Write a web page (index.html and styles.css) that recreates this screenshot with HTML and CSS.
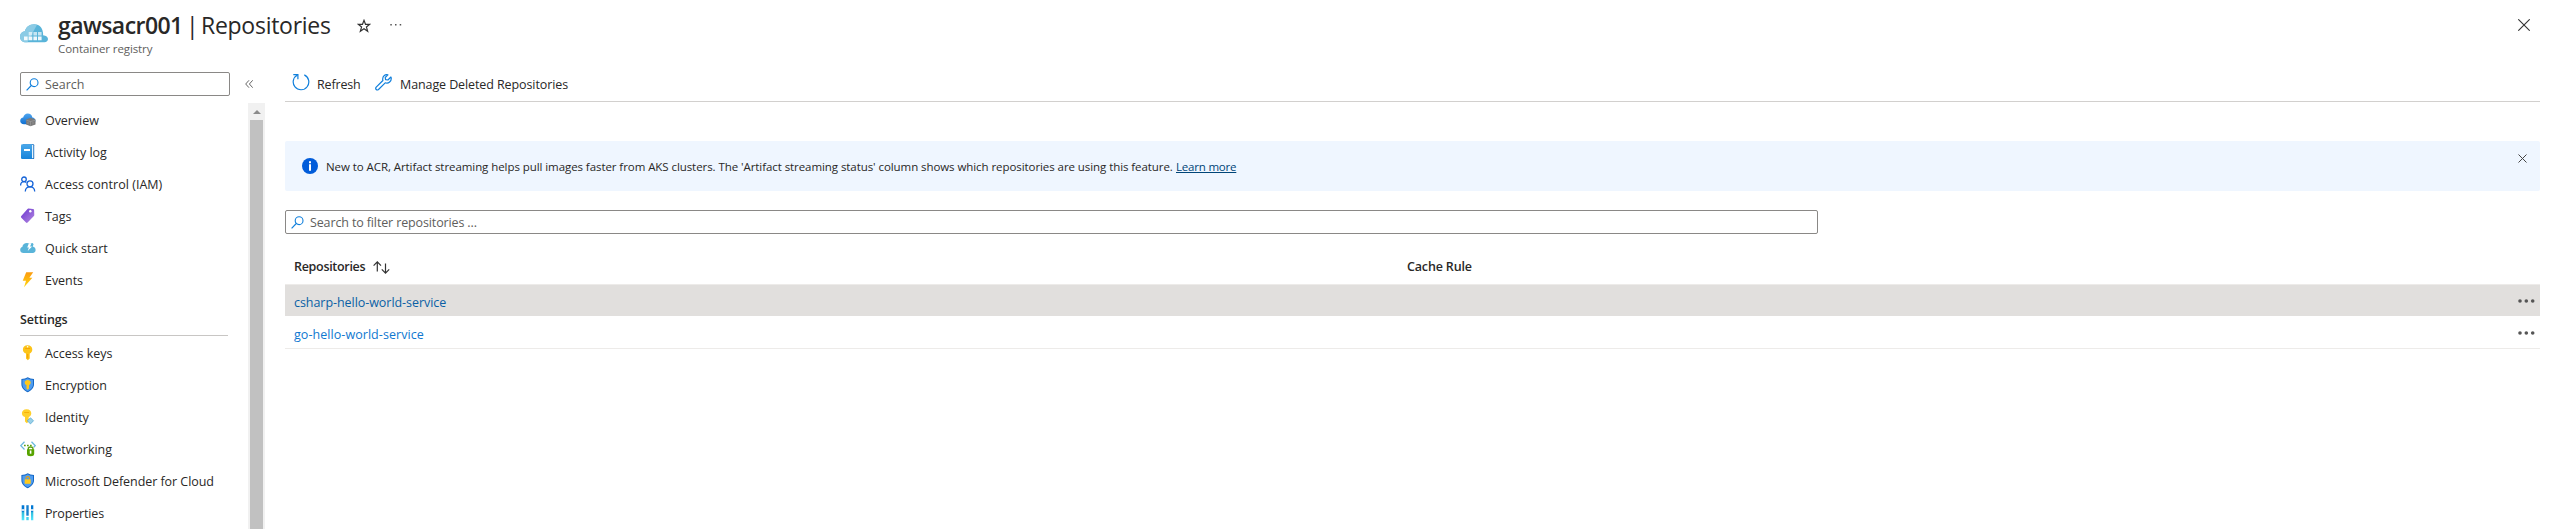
FILE: index.html
```html
<!DOCTYPE html>
<html lang="en">
<head>
<meta charset="utf-8">
<title>gawsacr001 | Repositories</title>
<link rel="stylesheet" href="styles.css">
</head>
<body>
<svg width="0" height="0" class="defs">
  <defs>
    <linearGradient id="blue" x1="0" y1="0" x2="0" y2="1"><stop offset="0" stop-color="#4fa5ef"/><stop offset="1" stop-color="#0f6fd0"/></linearGradient>
    <linearGradient id="book" x1="0" y1="0" x2="0" y2="1"><stop offset="0" stop-color="#4aa8ea"/><stop offset="1" stop-color="#1583da"/></linearGradient>
    <linearGradient id="cyan" x1="0" y1="0" x2="0" y2="1"><stop offset="0" stop-color="#0078d4"/><stop offset=".4" stop-color="#0078d4"/><stop offset=".5" stop-color="#32bedd"/><stop offset="1" stop-color="#50e6ff"/></linearGradient>
    <linearGradient id="purple" x1="0" y1="0" x2="1" y2="1"><stop offset="0" stop-color="#6a35d0"/><stop offset="1" stop-color="#b58ae0"/></linearGradient>
    <linearGradient id="gold" x1="0" y1="0" x2="0" y2="1"><stop offset="0" stop-color="#fb9a10"/><stop offset="1" stop-color="#ffd70f"/></linearGradient>
    <symbol id="lens" viewBox="0 0 13 13"><g fill="none" stroke="#0f7fdc" stroke-width="1.1"><circle cx="8.1" cy="4.7" r="3.9"/><path d="M5.3 7.5.6 12.3"/></g></symbol>
    <symbol id="more" viewBox="0 0 17 4"><g fill="#555"><circle cx="2" cy="2" r="1.8"/><circle cx="8.3" cy="2" r="1.8"/><circle cx="14.7" cy="2" r="1.8"/></g></symbol>
  </defs>
</svg>
<div class="blade">
  <header class="header">
    <svg class="logo" viewBox="0 0 28 19">
      <path fill="#59b4d9" d="M6 18.300C2.600 18.300 0 15.800 0 12.700 0 9.800 2.200 7.500 5 7.200 5.800 3.200 9.200.2 14.300.2c4.500 0 7.300 2.800 8.200 6.200q.9 3 .6 4.800C26.300 11.500 28 13.100 28 15c0 1.900-1.500 3.300-3.500 3.300z"/>
      <path fill="#8bcbe5" d="M6 18.300C2.600 18.300 0 15.800 0 12.700 0 9.800 2.200 7.500 5 7.200 5.800 3.200 9.200.2 14.300.2L17 .8 7.500 18.300z"/>
      <g fill="#fff"><path fill-opacity=".9" d="M4 12.600h3.600v3.600H4zM8.700 12.600h3.600v3.600H8.700zM13.400 12.600H17v3.600h-3.600zM18 12.600h3.600v3.600H18z"/><path fill-opacity=".65" d="M8.700 7.900h3.600v3.600H8.700zM13.400 7.900H17v3.600h-3.600zM18 7.900h3.600v3.600H18z"/></g>
    </svg>
    <div class="titles">
      <h1 class="title"><b class="name">gawsacr001</b><span class="bar">|</span><span class="page">Repositories</span></h1>
      <div class="subtitle">Container registry</div>
    </div>
    <svg class="star" viewBox="0 0 14 14"><path fill="none" stroke="#333" stroke-width="1.15" d="m7 1.300 1.500 4h4.300L9.400 8l1.300 4.300L7 9.800l-3.700 2.500L4.600 8 1.200 5.300h4.300z"/></svg>
    <svg class="dots" viewBox="0 0 12 2"><path fill="#555" d="M.3 0h1.500v1.500H.3zM5 0h1.500v1.500H5zM9.700 0h1.500v1.500H9.700z"/></svg>
    <svg class="close" viewBox="0 0 12 12"><path stroke="#333" stroke-width="1.100" d="m.3.3 11.400 11.400M11.700.3.3 11.700"/></svg>
  </header>
  <div class="body">
    <nav class="sidebar">
      <div class="searchrow">
        <div class="input side-input"><svg class="lens"><use href="#lens"/></svg><span class="label">Search</span></div>
        <svg class="collapse" viewBox="0 0 8 8"><path fill="none" stroke="#666" d="M4 .3.7 4 4 7.700M7.700.3 4.400 4l3.300 3.700"/></svg>
      </div>
      <div class="scroll">
        <div class="menu">
          <a class="item"><svg class="ico" viewBox="0 0 16 16"><path fill="url(#blue)" d="M4 12.200C1.700 12.200.2 10.800.2 8.900c0-1.800 1.300-3.100 3-3.300C3.600 3.200 5.400 1.500 7.800 1.500c2.300 0 4.200 1.500 4.600 3.900 1.800.2 3 1.500 3 3.300 0 1.900-1.500 3.500-3.500 3.500z"/><path fill="#7a7a7a" d="m10.500 5.800 5 1.700v5l-5 1.700-4.400-1.700v-5z"/><path fill="none" stroke="#aaa" stroke-width=".5" d="M6.500 8.300l4 1.200 4.700-1.200M8 10v2M10.500 9.500v4.300M13 9.800v2.500"/></svg><span class="label">Overview</span></a>
          <a class="item"><svg class="ico" viewBox="0 0 16 16"><path fill="#1b6fc0" d="M3 .3h10.300q.9 0 .9.900v13q0 .9-.9.900H3z"/><path fill="#e8f3fb" d="M3 1h10.300v13.200H3z"/><path fill="url(#book)" d="M2.300.3H12v14.800H2.300q-1.300 0-1.300-1.300V1.600Q1 .3 2.300.3z"/><path fill="#fff" d="M4 5h6v2H4z"/></svg><span class="label">Activity log</span></a>
          <a class="item"><svg class="ico" viewBox="0 0 16 16"><g fill="none" stroke="#1664d8" stroke-width="1.300"><circle cx="4" cy="3.300" r="2.300"/><path d="M.6 9.500C.6 7 2 5.700 4 5.700q1.300 0 2.300.7"/><circle cx="10" cy="7.800" r="3"/><path d="M5.300 15.500c0-3 2-4.700 4.700-4.700s4.700 1.700 4.700 4.700"/></g></svg><span class="label t-iam">Access control (IAM)</span></a>
          <a class="item"><svg class="ico" viewBox="0 0 16 16"><path fill="url(#purple)" d="M8.500.6 13 .9q1 .1 1.100 1.100l.2 5q0 .6-.4 1.100l-6.300 6.500q-.8.8-1.600 0L1.300 9.700q-.8-.8 0-1.600L7.500 1q.4-.5 1-.4z"/><circle cx="10.300" cy="3.200" r="1.200" fill="#fff"/></svg><span class="label">Tags</span></a>
          <a class="item"><svg class="ico" viewBox="0 0 16 16"><path fill="#59b4d9" d="M3.500 13C1.500 13 .2 11.600.2 9.900c0-1.600.9-2.600 2.100-2.900C2.600 4.500 4.600 3 7 3q1.200 0 2.200.6L12.600 3l1 1.200-.9 2.300q2.900.9 2.900 3.600c0 1.700-1 2.900-2.800 2.900z"/><path fill="#fff" d="M8.900 3.300h2.500L10.100 6.400h2L7.700 11l1.200-3.500H7.200z"/></svg><span class="label">Quick start</span></a>
          <a class="item"><svg class="ico" viewBox="0 0 16 16"><path fill="url(#gold)" d="M6.200.2h7L9.400 5.800h3L4 15.200l2-6.400H2.700z"/></svg><span class="label">Events</span></a>
          <h2 class="group">Settings</h2>
          <a class="item"><svg class="ico" viewBox="0 0 16 16"><path fill="#fcc419" d="M7.600.3c3 0 4.700 1.900 4.700 4.300 0 2-1.200 3.500-2.600 4v4.900L7.800 15.300 6 13.500v-4.900C4 8.100 2.900 6.600 2.900 4.600 2.900 2.200 4.600.3 7.600.3z"/><path fill="#f59b00" d="M5.200 3.200h4.900v.9H5.200zM7.300 9h.9v4.500h-.9z"/><circle cx="7.600" cy="1.800" r=".8" fill="#fff"/></svg><span class="label">Access keys</span></a>
          <a class="item"><svg class="ico" viewBox="0 0 16 16"><path fill="#1467c4" d="M7.700.2q2.400 1.800 6.300 1.800v5.300c0 4-3.500 6.700-6.300 8-2.800-1.300-6.300-4-6.300-8V2q4 0 6.300-1.800z"/><path fill="#4f9cf0" d="M7.700 1.200q2.200 1.500 5.300 1.600v4.600c0 3.300-2.900 5.600-5.300 6.800-2.400-1.200-5.300-3.500-5.300-6.800V2.800q3.100-.1 5.300-1.600z"/><path fill="#ffc91c" d="M7.700 3c1.800 0 3 1.100 3 2.600 0 1.300-.9 2.200-1.700 2.500v3.500l-1.300 1.200-1.200-1.200V8.100c-1-.3-1.800-1.200-1.800-2.500C4.700 4.100 5.900 3 7.700 3z"/></svg><span class="label">Encryption</span></a>
          <a class="item"><svg class="ico" viewBox="0 0 16 16"><path fill="#ffd02b" d="M6.600.3c3 0 4.700 1.700 4.700 4 0 2-1.200 3.300-2.600 3.700v4.500l-1.900 1.700L5 12.500V8C3 7.600 1.900 6.300 1.900 4.300 1.900 2 3.600.3 6.600.3z"/><path fill="#f5a800" d="M4.200 3.200h4.900v.8H4.200z"/><path fill="#9bd0e8" stroke="#4aa3cf" stroke-width=".7" d="m10.500 8.800 3 3-3 3.100-3.200-3.100z"/></svg><span class="label">Identity</span></a>
          <a class="item"><svg class="ico" viewBox="0 0 16 16"><path fill="none" stroke="#6bb9de" stroke-width="1.300" d="M4.500.7.800 4.600 4.500 8.500M11.500.7l3.700 3.900-1.500 1.600"/><path fill="#5ca010" d="M4 3.800h1.700v1.500H4zM7 3.800h1.700v1.500H7zM10 3.800h1.700v1.500H10z"/><path fill="none" stroke="#5ca010" stroke-width="1.400" d="M8.300 9V7.600q0-1.600 2.300-1.600t2.300 1.600V9"/><path fill="#57a300" d="M7 8.300h7.200v4.500q0 2.500-3.600 2.500T7 12.800z"/><path fill="#fff" d="M9.800 9.500h1.600v3.200H9.800z"/></svg><span class="label">Networking</span></a>
          <a class="item"><svg class="ico" viewBox="0 0 16 16"><path fill="#1467c4" d="M7.700.2q2.400 1.800 6.300 1.800v5.300c0 4-3.500 6.700-6.300 8-2.800-1.300-6.300-4-6.300-8V2q4 0 6.300-1.800z"/><path fill="#4f9cf0" d="M7.700 1.200q2.200 1.500 5.300 1.600v4.600c0 3.300-2.900 5.600-5.300 6.800-2.400-1.200-5.300-3.500-5.300-6.800V2.800q3.100-.1 5.300-1.600z"/><path fill="none" stroke="#e8a20c" stroke-width="1.100" d="M5.900 6.500V5.300q0-1.700 1.800-1.700t1.800 1.700v1.200"/><path fill="#ffc91c" d="M4.700 6.300h6v4.500h-6z"/></svg><span class="label">Microsoft Defender for Cloud</span></a>
          <a class="item"><svg class="ico" viewBox="0 0 16 16"><path fill="url(#cyan)" d="M1.700.2h2.600v15H1.700zM11 .2h2.300v15H11z"/><path fill="#fff" d="M1.500 4.200h3v1.500h-3zM10.800 4.200h3v1.500h-3z"/><path fill="#1580d0" d="M6.300.2h2.400v10.500H6.300z"/><path fill="#3fd0ee" d="M6.300 12h2.400v3.200H6.300z"/></svg><span class="label t-prop">Properties</span></a>
        </div>
        <div class="track"><svg class="up" viewBox="0 0 8 4"><path fill="#8b8b8b" d="M4 0 8 4H0z"/></svg><div class="thumb"></div></div>
      </div>
    </nav>
    <main class="main">
      <div class="toolbar">
        <svg class="refresh" viewBox="0 0 18 18"><g fill="none" stroke="#0f7fdc" stroke-width="1.200"><path d="M12.300 1.900a7.800 7.800 0 1 1-6.800.1"/><path d="M1.300 1.600h4.600v4.600"/></g></svg>
        <span class="label t-refresh">Refresh</span>
        <svg class="wrench" viewBox="0 0 17 17"><path fill="none" stroke="#0f7fdc" stroke-width="1.200" stroke-linejoin="round" d="M12.900.9C10.400.1 7.500 2 7.700 5.400q0 .7.200 1.100l-6.700 6.700q-1 1.300 0 2.300t2.300 0l6.700-6.700c3.400 1.200 6.400-1.600 6-4.800l-.3-1-3 3-2.300-.4-.4-2.100z"/></svg>
        <span class="label t-manage">Manage Deleted Repositories</span>
      </div>
      <div class="banner">
        <svg class="info" viewBox="0 0 16 16"><circle cx="8" cy="8" r="8" fill="#015cda"/><path fill="#fff" d="M7 6.300h2v6.400H7zM7 3.200h2v2H7z"/></svg>
        <span class="label msg">New to ACR, Artifact streaming helps pull images faster from AKS clusters. The 'Artifact streaming status' column shows which repositories are using this feature.</span>
        <a class="label learn">Learn more</a>
        <svg class="dismiss" viewBox="0 0 9 9"><path stroke="#444" d="m.5.5 8 8M8.500.5l-8 8"/></svg>
      </div>
      <div class="input filter"><svg class="lens"><use href="#lens"/></svg><span class="label t-filter">Search to filter repositories ...</span></div>
      <div class="thead">
        <div class="c1"><span class="t-repos">Repositories</span><svg class="sort" viewBox="0 0 17 13"><path fill="none" stroke="#333" stroke-width="1.200" d="M4.300 10.500V1M.6 4.600 4.300.9 8 4.600M12.500 2.500v9.700M8.800 8.400l3.700 3.700 3.700-3.700"/></svg></div>
        <div class="c2">Cache Rule</div>
      </div>
      <div class="row selected"><a class="label">csharp-hello-world-service</a><svg class="more"><use href="#more"/></svg></div>
      <div class="row"><a class="label t-go">go-hello-world-service</a><svg class="more"><use href="#more"/></svg></div>
    </main>
  </div>
</div>
</body>
</html>
```

FILE: styles.css
```css
* { box-sizing: border-box; }
body { margin: 0; background: #fff; color: #292827; font: 12.5px/18px "Open Sans", "Noto Sans", sans-serif; letter-spacing: -.05px; white-space: nowrap; overflow: hidden; }
svg { display: block; flex: none; }
.defs { position: absolute; }
.blade { height: 529px; display: flex; flex-direction: column; overflow: hidden; }
.header { height: 72px; flex: none; display: flex; align-items: flex-start; padding: 0 30px 0 20px; }
.logo { width: 28px; height: 19px; margin-top: 24px; }
.titles { width: 299px; margin-left: 10px; padding-top: 8px; }
.title { display: flex; margin: 0; font-size: 23px; line-height: 34px; font-weight: 400; }
.name { width: 128px; font-weight: 600; letter-spacing: -.55px; }
.bar { width: 15px; }
.page { letter-spacing: -.27px; }
.subtitle { font-size: 11.5px; line-height: 16px; color: #605e5c; margin-top: -1px; letter-spacing: -.1px; }
.star { width: 14px; height: 14px; margin-top: 19px; }
.dots { width: 12px; height: 2px; margin: 24px 0 0 19px; }
.close { width: 12px; height: 12px; margin: 19px 0 0 auto; }
.body { flex: 1; min-height: 0; display: flex; }
.sidebar { width: 265px; flex: none; display: flex; flex-direction: column; }
.searchrow { display: flex; align-items: center; height: 24px; padding-left: 20px; flex: none; }
.label { padding-top: 2px; }
.input { height: 24px; border: 1px solid #8a8886; border-radius: 2px; display: flex; align-items: center; padding-left: 5px; color: #605e5c; }
.side-input { width: 210px; }
.lens { width: 13px; height: 13px; margin-right: 6px; }
.collapse { width: 8px; height: 8px; margin-left: 15px; }
.scroll { flex: 1; min-height: 0; margin-top: 7px; display: flex; justify-content: space-between; overflow: hidden; }
.menu { padding: 1px 0 0 20px; width: 228px; }
.item { display: flex; align-items: center; height: 32px; }
.ico { width: 16px; height: 16px; margin-right: 9px; }
.t-iam { letter-spacing: .03px; }
.t-prop { letter-spacing: -.15px; }
.group { height: 40px; margin: 0 0 1px; padding-top: 14px; border-bottom: 1px solid #c8c6c4; font-size: 12.5px; line-height: 20px; font-weight: 600; letter-spacing: -.1px; }
.track { width: 17px; background: #f1f1f1; display: flex; flex-direction: column; align-items: center; }
.up { width: 8px; height: 4px; margin: 7px 0 6px; }
.thumb { width: 13px; flex: 1; background: #c1c1c1; }
.main { width: 2255px; margin-left: 20px; }
.toolbar { height: 30px; border-bottom: 1px solid #d2d0ce; display: flex; padding: 0 0 6px 7px; align-items: center; }
.refresh { width: 18px; height: 18px; margin-right: 7px; margin-top: -3px; }
.t-refresh { width: 58px; letter-spacing: -.15px; }
.wrench { width: 17px; height: 17px; margin-right: 8px; margin-top: -3px; }
.t-manage { letter-spacing: -.1px; }
.banner { height: 50px; margin-top: 39px; padding: 0 13px 0 17px; background: #eff6ff; border-radius: 2px; display: flex; align-items: center; font-size: 11.5px; }
.info { width: 16px; height: 16px; margin-right: 8px; }
.msg { width: 850px; letter-spacing: -.07px; }
.learn { color: #004578; text-decoration: underline; letter-spacing: -.2px; }
.dismiss { width: 9px; height: 9px; margin: 13px 0 auto auto; }
.filter { width: 1533px; margin-top: 19px; }
.t-filter { letter-spacing: -.13px; }
.thead { display: flex; align-items: center; height: 50px; padding: 16px 0 0 9px; font-weight: 600; letter-spacing: -.3px; }
.c1 { width: 1113px; display: flex; align-items: center; }
.c2 { letter-spacing: -.15px; }
.t-repos { width: 79px; }
.sort { width: 17px; height: 13px; }
.row { height: 33px; padding: 3px 5px 0 9px; display: flex; align-items: center; justify-content: space-between; border-bottom: 1px solid #edebe9; color: #0f78d0; }
.selected { height: 32px; background: #e1dfdd; border-top: 1px solid #edebe9; border-bottom: 0; padding-top: 2px; color: #0a5fa5; }
.t-go { letter-spacing: .06px; }
.more { width: 17px; height: 4px; margin-top: -2px; }
```
